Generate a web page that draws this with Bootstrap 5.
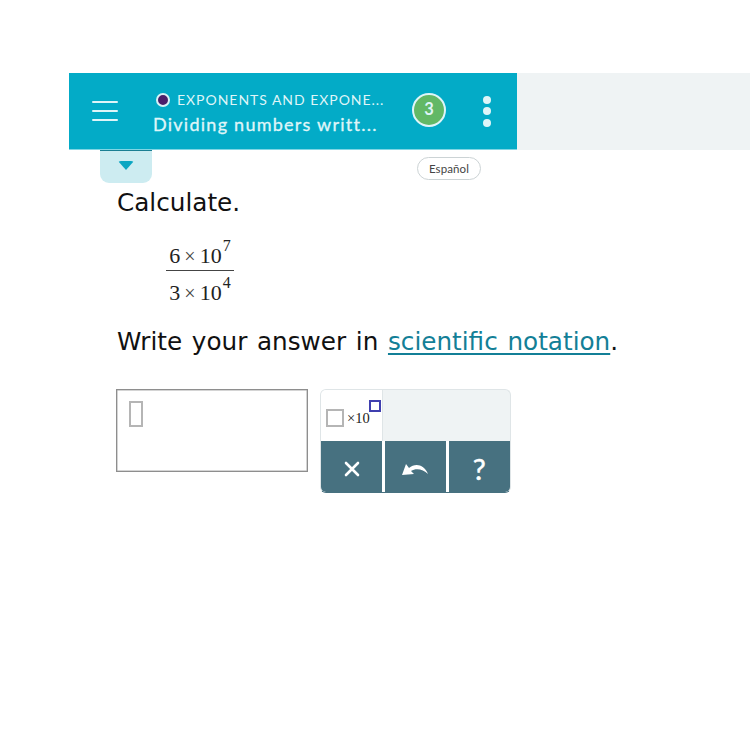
<!DOCTYPE html>
<html lang="en">
<head>
<meta charset="utf-8">
<title>Calculate</title>
<link href="https://cdn.jsdelivr.net/npm/bootstrap@5.3.0/dist/css/bootstrap.min.css" rel="stylesheet">
<style>
html,body{height:100%;}
body{background:#fff;font-family:"DejaVu Sans",sans-serif;color:#111;overflow:hidden;}
.stage{padding-top:73px;padding-left:69px;height:750px;}
.topband{height:77px;background:#eff3f4;}
.topic-bar{width:448px;height:77px;background:#03abc7;color:#dff5f8;font-family:Lato,sans-serif;border-bottom:1px solid #7fd6e4;}
.burger{width:26px;margin-left:23px;gap:6.5px;}
.burger span{display:block;height:2.5px;background:#dff5f8;border-radius:2px;}
.titles{width:240px;margin-left:35px;padding-top:5px;}
.crumb{font-size:14px;letter-spacing:.97px;line-height:18px;padding-left:3px;gap:7px;}
.dot{width:14px;height:14px;border-radius:50%;background:#4a1f6a;border:2px solid #d8f2f6;flex:none;}
.lesson{font-size:18px;letter-spacing:1.25px;line-height:24px;-webkit-text-stroke:.35px #dff5f8;margin-top:3px;}
.score{width:34px;height:34px;border-radius:50%;background:#62b866;border:2px solid #dff5f8;color:#dff5f8;font-size:16.5px;font-weight:700;margin-left:19px;margin-top:-3px;}
.kebab{margin-left:37px;gap:3.5px;}
.kebab span{display:block;width:8px;height:8px;border-radius:50%;background:#dff5f8;}
.sub-row{height:39px;padding-right:269px;}
.drawer-tab{width:52px;height:33px;margin-left:31px;background:#cdecf1;border-top:1px solid #1b7f93;border-radius:0 0 9px 9px;}
.caret-down{width:0;height:0;border-left:8.5px solid transparent;border-right:8.5px solid transparent;border-top:9px solid #0ba6c2;border-radius:3px;margin-top:-4px;}
.lang{font-family:Lato,sans-serif;font-size:11.5px;letter-spacing:.1px;color:#444;height:23px;width:64px;border:1px solid #ccd3d5;border-radius:12px;margin-top:7px;}
.question{padding-left:48px;}
.q-line{font-size:24.7px;line-height:28px;word-spacing:1.8px;}
.fraction{font-family:"Liberation Serif",serif;font-size:22px;width:68px;margin-left:49px;margin-top:22px;line-height:28px;color:#222;}
.fraction .top{border-bottom:1.5px solid #444;height:32px;padding-top:3px;}
.fraction .bottom{padding-top:8px;height:33px;}
.fraction sup{font-size:16px;top:-.72em;margin-left:1px;}
.times{font-size:20px;color:#444;margin:0 4px;}
.answer-line{margin-top:24px;}
.answer-line a{color:#137f97;text-decoration:underline;text-underline-offset:3px;}
.work{margin-top:33px;gap:12px;margin-left:-1px;}
.answer-box{width:192px;height:83px;border:1px solid #8e8e8e;box-shadow:inset 0 0 0 .5px #aaa;padding:11px 12px;}
.caret-slot{width:14px;height:26px;border:2px solid #b5b5b5;}
.keypad{width:191px;height:104px;border-radius:6px;overflow:hidden;background:#eff3f4;border:1px solid #dfe5e7;border-bottom-color:#477180;}
.key-tpl{width:62px;height:51px;background:#fff;border-right:1px solid #dfe5e7;font-family:"Liberation Serif",serif;font-size:14.5px;position:relative;padding-left:5px;padding-top:19px;color:#222;}
.tpl-text{margin-top:-1px;}
.sq{width:18px;height:18px;border:2px solid #b5b5b5;margin-right:3px;}
.sq-exp{position:absolute;left:48px;top:10px;width:12px;height:12px;border:2px solid #3f3faf;}
.key-row{height:51px;gap:2.5px;background:#fff;}
.key-act{flex:1;background:#477180;color:#fff;padding-top:4px;}
.key-q{font-family:Lato,sans-serif;font-size:29px;-webkit-text-stroke:.5px #fff;}
</style>
</head>
<body>
<div class="stage">
  <div class="topband">
    <div class="topic-bar d-flex align-items-center">
      <div class="burger d-flex flex-column"><span></span><span></span><span></span></div>
      <div class="titles">
        <div class="crumb d-flex align-items-center"><span class="dot"></span><span>EXPONENTS AND EXPONE...</span></div>
        <div class="lesson">Dividing numbers writt...</div>
      </div>
      <div class="score d-flex align-items-center justify-content-center">3</div>
      <div class="kebab d-flex flex-column"><span></span><span></span><span></span></div>
    </div>
  </div>
  <div class="sub-row d-flex justify-content-between align-items-start">
    <div class="drawer-tab d-flex align-items-center justify-content-center"><span class="caret-down"></span></div>
    <div class="lang d-flex align-items-center justify-content-center">Español</div>
  </div>
  <div class="question">
    <div class="q-line">Calculate.</div>
    <div class="fraction text-center">
      <div class="top">6<span class="times">×</span>10<sup>7</sup></div>
      <div class="bottom">3<span class="times">×</span>10<sup>4</sup></div>
    </div>
    <div class="q-line answer-line">Write your answer in <a href="#">scientific notation</a>.</div>
    <div class="work d-flex align-items-start">
      <div class="answer-box"><div class="caret-slot"></div></div>
      <div class="keypad">
        <div class="key-tpl d-flex align-items-start">
          <span class="sq"></span><span class="tpl-text">×10</span><span class="sq-exp"></span>
        </div>
        <div class="key-row d-flex">
          <div class="key-act d-flex align-items-center justify-content-center">
            <svg width="16" height="16" viewBox="0 0 16 16"><path d="M2 2L14 14M14 2L2 14" stroke="#fff" stroke-width="2.6" stroke-linecap="round"/></svg>
          </div>
          <div class="key-act d-flex align-items-center justify-content-center">
            <svg width="28" height="16" viewBox="0 0 28 16"><path d="M1 14L5 3L8 7C14 2 23 3 27 13C22 8 15 7 10 10L13 13Z" fill="#fff"/></svg>
          </div>
          <div class="key-act key-q d-flex align-items-center justify-content-center">?</div>
        </div>
      </div>
    </div>
  </div>
</div>
<script src="https://cdn.jsdelivr.net/npm/bootstrap@5.3.0/dist/js/bootstrap.bundle.min.js"></script>
</body>
</html>
